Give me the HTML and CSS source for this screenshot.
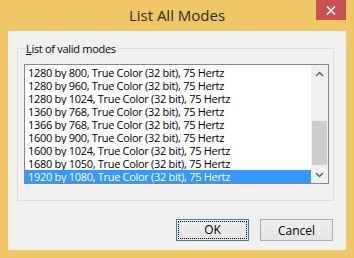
FILE: index.html
```html
<!DOCTYPE html>
<html>
    <head>
        <title>List All Modes</title>
        <link rel="stylesheet" href="styles.css">
    </head>
    <body>
        <div class="window">
            <div class="titlebar">
                <span></span>
                <h1 class="title">List All Modes</h1>
                <button class="close" aria-label="Close">
                    <svg width="10" height="9" viewBox="0 0 10 9"><path d="M1 0.5 L9 8.5 M9 0.5 L1 8.5" stroke="#fff" stroke-width="1.6"/></svg>
                </button>
            </div>
            <div class="client">
                <fieldset class="group">
                    <legend><u>L</u>ist of valid modes</legend>
                    <div class="listbox">
                        <ul class="items">
                            <li>1280 by 800, True Color (32 bit), 75 Hertz</li>
                            <li>1280 by 960, True Color (32 bit), 75 Hertz</li>
                            <li>1280 by 1024, True Color (32 bit), 75 Hertz</li>
                            <li>1360 by 768, True Color (32 bit), 75 Hertz</li>
                            <li>1366 by 768, True Color (32 bit), 75 Hertz</li>
                            <li>1600 by 900, True Color (32 bit), 75 Hertz</li>
                            <li>1600 by 1024, True Color (32 bit), 75 Hertz</li>
                            <li>1680 by 1050, True Color (32 bit), 75 Hertz</li>
                            <li class="sel">1920 by 1080, True Color (32 bit), 75 Hertz</li>
                        </ul>
                        <div class="scrollbar">
                            <div class="arrow">
                                <svg width="9" height="6" viewBox="0 0 9 6"><path d="M1 5 L4.5 1.5 L8 5" fill="none" stroke="#606060" stroke-width="1.5"/></svg>
                            </div>
                            <div class="track"><div class="thumb"></div></div>
                            <div class="arrow">
                                <svg width="9" height="6" viewBox="0 0 9 6"><path d="M1 1 L4.5 4.5 L8 1" fill="none" stroke="#606060" stroke-width="1.5"/></svg>
                            </div>
                        </div>
                    </div>
                </fieldset>
                <div class="buttons">
                    <button class="btn default"><span>OK</span></button>
                    <button class="btn">Cancel</button>
                </div>
            </div>
        </div>
    </body>
</html>
```

FILE: styles.css
```css
* {
    margin: 0;
    padding: 0;
    box-sizing: border-box;
}
body {
    font-family: "Open Sans", "Noto Sans", sans-serif;
    font-size: 11px;
    letter-spacing: -0.3px;
    color: #000;
    background-color: #efc766;
}
.window {
    width: 354px;
    height: 258px;
    background-color: #efc766;
    padding: 0 8px 8px;
    display: flex;
    flex-direction: column;
}
.titlebar {
    height: 31px;
    display: grid;
    grid-template-columns: 30px 1fr 30px;
    align-items: start;
}
.title {
    font-size: 15px;
    font-weight: normal;
    letter-spacing: 0;
    color: #2a2a2a;
    text-align: center;
    line-height: 30px;
}
.close {
    width: 30px;
    height: 20px;
    background-color: #c75050;
    border: none;
    display: flex;
    align-items: center;
    justify-content: center;
}
.client {
    flex: 1;
    background-color: #f0f0f0;
    padding: 11px 12px 0 9px;
    display: flex;
    flex-direction: column;
}
.group {
    border: 1px solid #dcdcdc;
    padding: 9px 4px 16px 6px;
}
.group legend {
    margin-left: 1px;
    padding: 0 2px 0 1px;
    line-height: 13px;
}
.group legend u {
    text-decoration: underline;
    text-underline-offset: 1px;
}
.listbox {
    border: 1px solid #828790;
    background-color: #fff;
    height: 120px;
    display: flex;
}
.items {
    list-style: none;
    flex: 1;
    padding-top: 1px;
    overflow: hidden;
}
.items li {
    height: 13px;
    line-height: 13px;
    padding-left: 3px;
    white-space: nowrap;
    overflow: hidden;
}
.items li.sel {
    background-color: #3399ff;
    color: #fff;
}
.scrollbar {
    width: 17px;
    background-color: #f0f0f0;
    display: flex;
    flex-direction: column;
}
.arrow {
    height: 17px;
    display: flex;
    align-items: center;
    justify-content: center;
}
.track {
    flex: 1;
    padding: 39px 1px 0 1px;
}
.thumb {
    height: 44px;
    background-color: #cdcdcd;
}
.buttons {
    display: flex;
    justify-content: flex-end;
    gap: 11px;
    margin-top: 18px;
    padding-right: 1px;
}
.btn {
    width: 73px;
    height: 22px;
    font-family: "Open Sans", "Noto Sans", sans-serif;
    font-size: 12px;
    color: #000;
    background: linear-gradient(#f0f0f0, #e5e5e5);
    border: 1px solid #acacac;
}
.btn.default {
    border-color: #3c7fb1;
    padding: 2px;
}
.btn.default span {
    display: block;
    height: 100%;
    line-height: 16px;
    outline: 1px dotted #000;
}
```
